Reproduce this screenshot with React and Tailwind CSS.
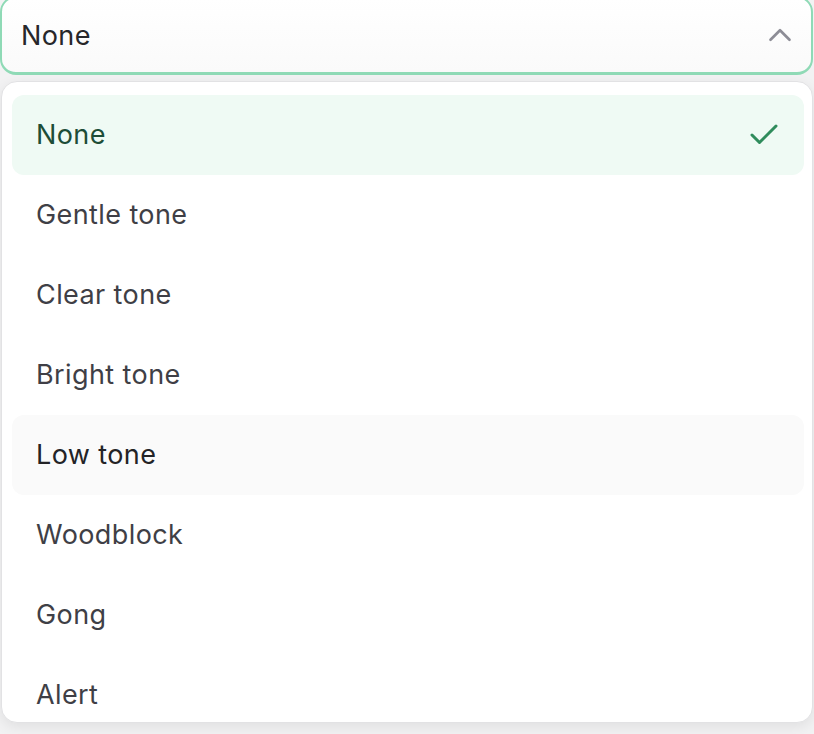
import { Check, ChevronUp } from 'lucide-react'

const options = [
  'None',
  'Gentle tone',
  'Clear tone',
  'Bright tone',
  'Low tone',
  'Woodblock',
  'Gong',
  'Alert',
]

export default function App() {
  const selected = 'None'
  const hovered = 'Low tone'

  return (
    <div
      className="h-[734px] w-[814px] overflow-hidden bg-[#f2f2f3] flex flex-col"
      style={{ fontFamily: 'Inter, "Noto Sans", sans-serif' }}
    >
      {/* Trigger */}
      <button className="-mt-1 h-[79px] w-[813px] shrink-0 flex items-center justify-between pl-[19px] pr-[12px] rounded-2xl border-2 border-b-[3px] border-[#8fdab6] bg-gradient-to-b from-white to-[#fafafa] text-left">
        <span className="text-[27px] tracking-[0.015em] text-[#27272a] leading-none pt-[1px]">None</span>
        <ChevronUp size={38} strokeWidth={1.7} className="text-[#8d8d96]" />
      </button>

      {/* Listbox */}
      <div className="mt-[6px] ml-[1px] w-[812px] h-[642px] shrink-0 overflow-hidden rounded-2xl border border-[#e2e2e4] bg-white shadow-[0_4px_14px_rgba(0,0,0,0.08)] pt-[13px] pl-[10px] pr-[8px]">
        <ul className="flex flex-col">
          {options.map((opt) => {
            const isSelected = opt === selected
            const isHovered = opt === hovered
            return (
              <li
                key={opt}
                className={`h-[80px] shrink-0 flex items-center justify-between pl-[24px] pr-[22px] rounded-xl text-[27px] tracking-[0.015em] ${
                  isSelected
                    ? 'bg-[#effaf4] text-[#1d4d37]'
                    : isHovered
                    ? 'bg-[#fafafa] text-[#232326]'
                    : 'text-[#3f3f46]'
                }`}
              >
                <span className="pt-[1px]">{opt}</span>
                {isSelected && <Check size={36} strokeWidth={2} className="text-[#2f8c5c]" />}
              </li>
            )
          })}
        </ul>
      </div>
    </div>
  )
}
